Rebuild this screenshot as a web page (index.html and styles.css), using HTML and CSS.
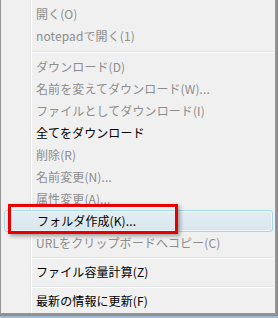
FILE: index.html
```html
<!DOCTYPE html>
<html lang="ja">
  <head>
    <meta charset="UTF-8" />
    <title>メニュー</title>
    <link rel="stylesheet" href="styles.css">
  </head>
  <body>
    <div class="menu">
      <div class="item off">開く(O)</div>
      <div class="item off">notepadで開く(1)</div>
      <div class="sep first"></div>
      <div class="item off">ダウンロード(D)</div>
      <div class="item off">名前を変えてダウンロード(W)...</div>
      <div class="item off">ファイルとしてダウンロード(I)</div>
      <div class="item">全てをダウンロード</div>
      <div class="item off">削除(R)</div>
      <div class="item off">名前変更(N)...</div>
      <div class="item off">属性変更(A)...</div>
      <div class="item hover">フォルダ作成(K)...</div>
      <div class="item off">URLをクリップボードへコピー(C)</div>
      <div class="sep"></div>
      <div class="item">ファイル容量計算(Z)</div>
      <div class="sep"></div>
      <div class="item">最新の情報に更新(F)</div>
      <!-- 注目用の赤枠 -->
      <div class="mark"></div>
    </div>
  </body>
</html>
```

FILE: styles.css
```css
body {
  margin: 0;
  width: 278px;
  height: 318px;
  background: linear-gradient(#8f8f8f 316px, #9fbad3 316px);
  overflow: hidden;
  font-family: "Noto Sans CJK JP", "Noto Sans", sans-serif;
  font-size: 12px;
}
.menu {
  position: relative;
  box-sizing: border-box;
  width: 276px;
  height: 314px;
  padding-top: 3px;
  background: #f0f0f0;
  border: 1px solid #979797;
  border-top: none;
}
.menu::before {
  content: "";
  position: absolute;
  left: 29px;
  top: 0;
  bottom: 0;
  width: 1px;
  background: #e2e3e3;
  border-right: 1px solid #ffffff;
}
.item {
  position: relative;
  box-sizing: border-box;
  height: 22px;
  line-height: 22px;
  padding-left: 35px;
  color: #000;
  white-space: nowrap;
  letter-spacing: 0.1px;
}
.item.off {
  color: #8d8d8d;
}
.item.hover {
  margin: 0 2px 0 3px;
  padding-left: 32px;
  line-height: 20px;
  border: 1px solid #a8d8eb;
  border-radius: 3px;
  background: linear-gradient(#e3eef3, #d8e6ec);
  box-shadow: inset 0 0 0 1px rgba(255, 255, 255, 0.5);
}
.sep {
  position: relative;
  height: 7px;
}
.sep::after {
  content: "";
  position: absolute;
  left: 31px;
  right: 2px;
  top: 3px;
  height: 1px;
  background: #dfe3e6;
  border-bottom: 1px solid #ffffff;
}
.sep.first {
  height: 9px;
}
.sep.first::after {
  top: 4px;
}
.mark {
  position: absolute;
  left: 7px;
  top: 204px;
  width: 170px;
  height: 30px;
  box-sizing: border-box;
  border: 3px solid #e60000;
  box-shadow: 2px 2px 4px rgba(0, 0, 0, 0.35);
}
```
